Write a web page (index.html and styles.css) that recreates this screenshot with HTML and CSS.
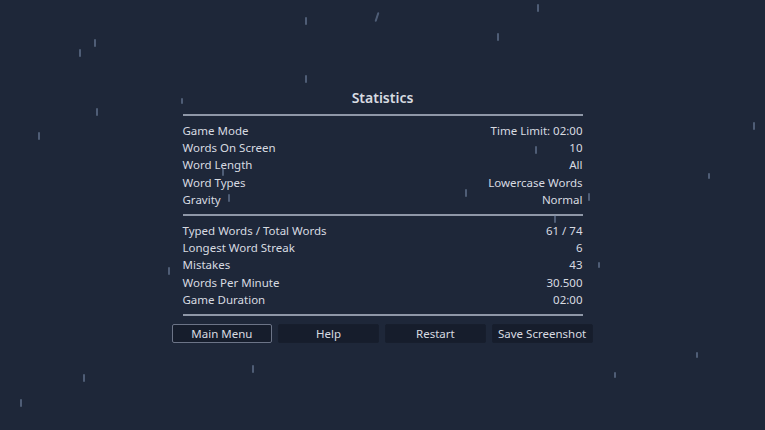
FILE: index.html
```html
<!DOCTYPE html>
<html>
<head>
    <title>Statistics</title>
    <link rel="stylesheet" href="styles.css">
</head>
<body>
    <div class="scene">
        <!-- falling rain streaks -->
        <span class="drop" style="left:537px;top:4px"></span>
        <span class="drop slant" style="left:376px;top:12px"></span>
        <span class="drop" style="left:305px;top:17px"></span>
        <span class="drop" style="left:94px;top:39px"></span>
        <span class="drop" style="left:79px;top:49px"></span>
        <span class="drop" style="left:497px;top:33px"></span>
        <span class="drop" style="left:305px;top:75px"></span>
        <span class="drop short" style="left:181px;top:98px"></span>
        <span class="drop" style="left:96px;top:108px"></span>
        <span class="drop" style="left:38px;top:132px"></span>
        <span class="drop" style="left:753px;top:122px"></span>
        <span class="drop short" style="left:708px;top:173px"></span>
        <span class="drop" style="left:535px;top:146px"></span>
        <span class="drop" style="left:222px;top:168px"></span>
        <span class="drop" style="left:465px;top:189px"></span>
        <span class="drop" style="left:588px;top:193px"></span>
        <span class="drop" style="left:228px;top:194px"></span>
        <span class="drop" style="left:554px;top:215px"></span>
        <span class="drop" style="left:168px;top:267px"></span>
        <span class="drop short" style="left:598px;top:262px"></span>
        <span class="drop" style="left:252px;top:365px"></span>
        <span class="drop" style="left:83px;top:374px"></span>
        <span class="drop short" style="left:696px;top:352px"></span>
        <span class="drop short" style="left:614px;top:372px"></span>
        <span class="drop" style="left:20px;top:399px"></span>

        <div class="panel">
            <h1 class="title">Statistics</h1>
            <div class="sep"></div>

            <div class="rows">
                <div class="row"><span>Game Mode</span><span>Time Limit: 02:00</span></div>
                <div class="row"><span>Words On Screen</span><span>10</span></div>
                <div class="row"><span>Word Length</span><span>All</span></div>
                <div class="row"><span>Word Types</span><span>Lowercase Words</span></div>
                <div class="row"><span>Gravity</span><span>Normal</span></div>
            </div>
            <div class="sep"></div>

            <div class="rows">
                <div class="row"><span>Typed Words / Total Words</span><span>61 / 74</span></div>
                <div class="row"><span>Longest Word Streak</span><span>6</span></div>
                <div class="row"><span>Mistakes</span><span>43</span></div>
                <div class="row"><span>Words Per Minute</span><span>30.500</span></div>
                <div class="row"><span>Game Duration</span><span>02:00</span></div>
            </div>
            <div class="sep"></div>

            <div class="buttons">
                <button class="btn focused">Main Menu</button>
                <button class="btn">Help</button>
                <button class="btn">Restart</button>
                <button class="btn">Save Screenshot</button>
            </div>
        </div>
    </div>
</body>
</html>
```

FILE: styles.css
```css
body {
    margin: 0;
    background-color: #1e2739;
    font-family: "Noto Sans", "Open Sans", sans-serif;
    color: #d8dbe1;
}
.scene {
    position: relative;
    width: 765px;
    height: 430px;
    overflow: hidden;
}
.drop {
    position: absolute;
    width: 2px;
    height: 8px;
    background-color: rgba(120, 138, 170, 0.55);
    border-radius: 1px;
}
.drop.short {
    height: 6px;
}
.drop.slant {
    height: 10px;
    transform: rotate(18deg);
}
.panel {
    width: 400px;
    margin: 0 auto;
    padding-top: 88px;
}
.title {
    margin: 0 0 6px;
    font-size: 14px;
    font-weight: 600;
    line-height: 20px;
    text-align: center;
}
.sep {
    height: 2px;
    background-color: #8f97a7;
}
.rows {
    padding: 6px 0 6px;
}
.row {
    display: flex;
    justify-content: space-between;
    font-size: 11.5px;
    line-height: 17.2px;
}
.buttons {
    display: grid;
    grid-template-columns: repeat(4, 1fr);
    gap: 6px;
    margin: 7.5px -10px 0 -11px;
}
.btn {
    height: 19px;
    padding: 0;
    border: 1px solid #171e2d;
    border-radius: 2px;
    background-color: #161d2c;
    color: #d8dbe1;
    font-family: inherit;
    font-size: 11.5px;
}
.btn.focused {
    border-color: #6c7487;
}
```
